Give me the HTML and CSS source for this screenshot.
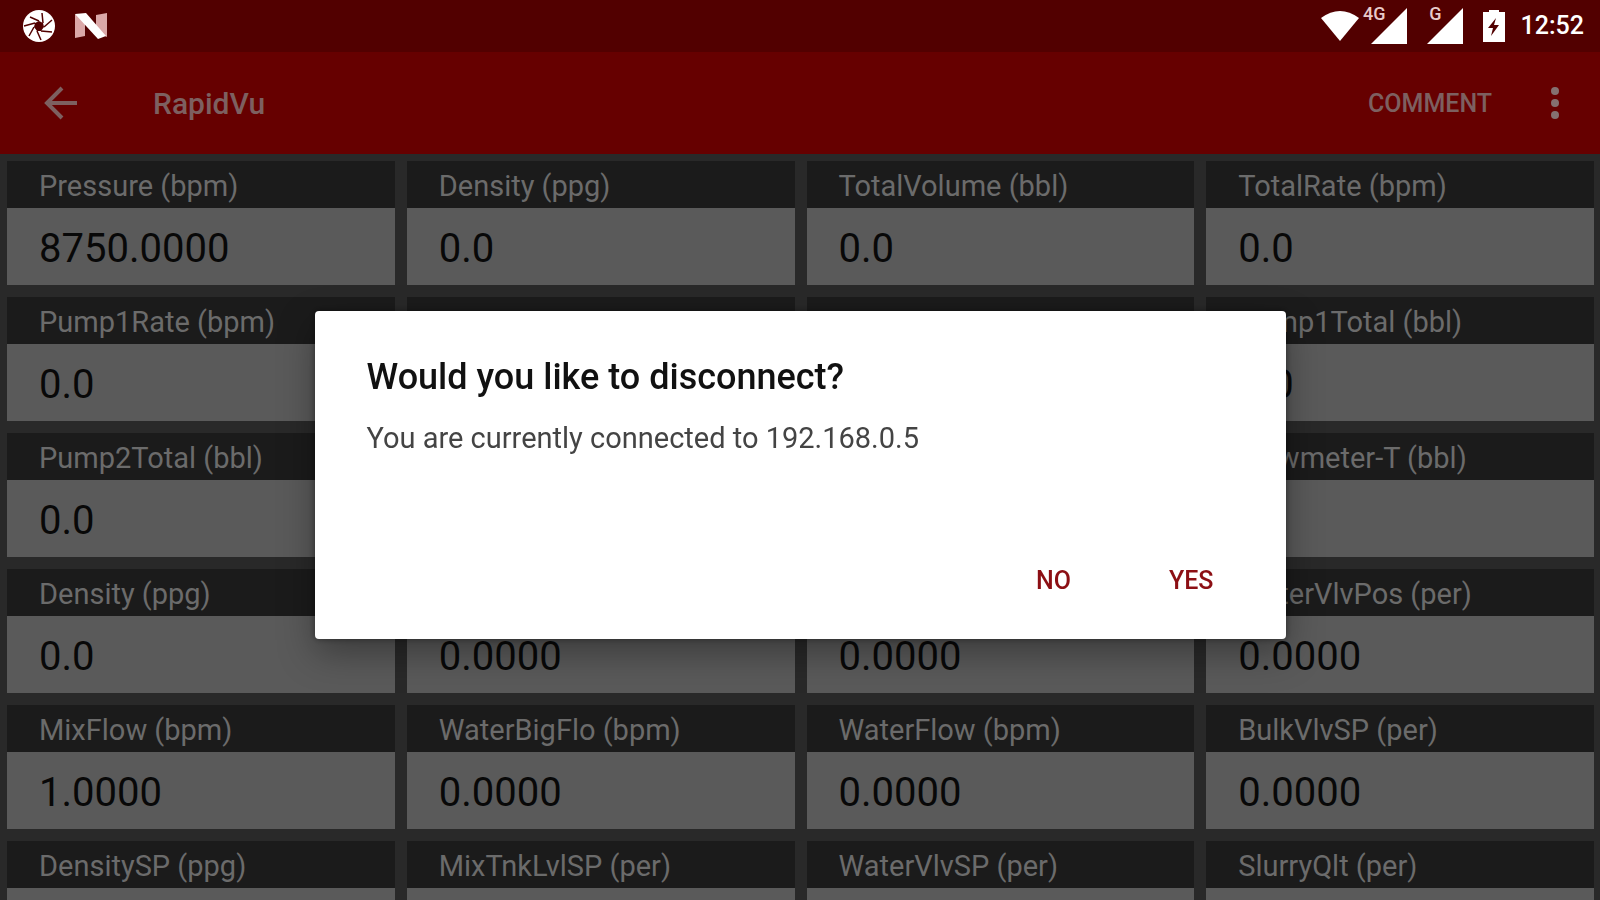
FILE: index.html
```html
<!DOCTYPE html>
<html lang="en">
<head>
    <meta charset="UTF-8">
    <meta name="viewport" content="width=device-width,initial-scale=1">
    <title>RapidVu</title>
    <link rel="stylesheet" href="styles.css">
</head>
<body>

<div class="status">
    <div class="status-left">
        <svg width="34" height="34" viewBox="0 0 34 34">
            <circle cx="17" cy="17" r="16" fill="#fff"/>
            <path d="M17 12l4 2 1 4-3 4-4 0-3-4 1-4z" fill="#520000"/>
            <path d="M17 12L8 8M21 14l-1-10M22 18l8-7M19 22l11 1M15 22l4 9M12 18l-5 9M13 14L2 17" stroke="#520000" stroke-width="1.5" fill="none"/>
        </svg>
        <svg width="34" height="28" viewBox="0 0 34 28">
            <path d="M1 2l10 6v16L1 26zM33 1v24l-11-5V3z" fill="#dba8a8"/>
            <path d="M1 2l11-1 20 23-8 3z" fill="#fff"/>
        </svg>
    </div>
    <div class="status-right">
        <svg width="38" height="32" viewBox="0 0 38 32"><path d="M0 8Q19-6 38 8L19 31z" fill="#fff"/></svg>
        <div class="signal">
            <span class="net">4G</span>
            <svg width="36" height="36" viewBox="0 0 36 36"><path d="M36 0v36H0z" fill="#fff"/></svg>
        </div>
        <div class="signal">
            <span class="net">G</span>
            <svg width="36" height="36" viewBox="0 0 36 36"><path d="M36 0v36H0z" fill="#fff"/></svg>
        </div>
        <svg width="22" height="32" viewBox="0 0 22 32">
            <path d="M6 0h10v2h6v30H0V2h6z" fill="#fff"/>
            <path d="M13 8L5 18h5l-2 8 8-11h-5z" fill="#520000"/>
        </svg>
        <span class="time">12:52</span>
    </div>
</div>

<header class="bar">
    <button class="icon-btn" type="button" aria-label="Back">
        <svg width="34" height="34" viewBox="0 0 34 34" fill="none" stroke="#7d6060" stroke-width="4"><path d="M33 17H4M18 2L3 17l15 15"/></svg>
    </button>
    <h1 class="bar-title">RapidVu</h1>
    <button class="comment" type="button">COMMENT</button>
    <button class="icon-btn" type="button" aria-label="More">
        <svg width="10" height="34" viewBox="0 0 10 34" fill="#857070"><circle cx="5" cy="5" r="4"/><circle cx="5" cy="17" r="4"/><circle cx="5" cy="29" r="4"/></svg>
    </button>
</header>

<main class="grid">
    <dl class="card"><dt>Pressure (bpm)</dt><dd>8750.0000</dd></dl>
    <dl class="card"><dt>Density (ppg)</dt><dd>0.0</dd></dl>
    <dl class="card"><dt>TotalVolume (bbl)</dt><dd>0.0</dd></dl>
    <dl class="card"><dt>TotalRate (bpm)</dt><dd>0.0</dd></dl>

    <dl class="card"><dt>Pump1Rate (bpm)</dt><dd>0.0</dd></dl>
    <dl class="card"><dt></dt><dd></dd></dl>
    <dl class="card"><dt></dt><dd></dd></dl>
    <dl class="card"><dt>Pump1Total (bbl)</dt><dd>0.0</dd></dl>

    <dl class="card"><dt>Pump2Total (bbl)</dt><dd>0.0</dd></dl>
    <dl class="card"><dt></dt><dd></dd></dl>
    <dl class="card"><dt></dt><dd></dd></dl>
    <dl class="card"><dt>Flowmeter-T (bbl)</dt><dd></dd></dl>

    <dl class="card"><dt>Density (ppg)</dt><dd>0.0</dd></dl>
    <dl class="card"><dt></dt><dd>0.0000</dd></dl>
    <dl class="card"><dt></dt><dd>0.0000</dd></dl>
    <dl class="card"><dt>WaterVlvPos (per)</dt><dd>0.0000</dd></dl>

    <dl class="card"><dt>MixFlow (bpm)</dt><dd>1.0000</dd></dl>
    <dl class="card"><dt>WaterBigFlo (bpm)</dt><dd>0.0000</dd></dl>
    <dl class="card"><dt>WaterFlow (bpm)</dt><dd>0.0000</dd></dl>
    <dl class="card"><dt>BulkVlvSP (per)</dt><dd>0.0000</dd></dl>

    <dl class="card"><dt>DensitySP (ppg)</dt><dd></dd></dl>
    <dl class="card"><dt>MixTnkLvlSP (per)</dt><dd></dd></dl>
    <dl class="card"><dt>WaterVlvSP (per)</dt><dd></dd></dl>
    <dl class="card"><dt>SlurryQlt (per)</dt><dd></dd></dl>
</main>

<div class="overlay">
    <section class="dialog" role="dialog" aria-labelledby="dialog-title">
        <h2 id="dialog-title">Would you like to disconnect?</h2>
        <p>You are currently connected to 192.168.0.5</p>
        <div class="actions">
            <button type="button">NO</button>
            <button type="button">YES</button>
        </div>
    </section>
</div>

</body>
</html>
```
FILE: styles.css
```css
*{
    margin:0;
    padding:0;
    box-sizing:border-box;
}

body {
    display:flex;
    flex-direction:column;
    height:100vh;
    background:#292929;
    font-family:Roboto, "Liberation Sans", sans-serif;
}
button {
    border:0;
    background:none;
    font-family:inherit;
    cursor:pointer;
}
svg {
    display:block;
}

/* status bar */
.status {
    display:flex;
    flex:none;
    justify-content:space-between;
    align-items:center;
    height:52px;
    padding:0 16px 0 22px;
    background:#520000;
    color:#fff;
}
.status-left {
    display:flex;
    align-items:center;
    gap:18px;
}
.status-right {
    display:flex;
    align-items:center;
    gap:12px;
}
.signal {
    position:relative;
    margin-right:8px;
}
.net {
    position:absolute;
    top:-4px;
    right:21px;
    font-size:18px;
    font-weight:500;
    line-height:20px;
    color:#e8caca;
}
.time {
    margin-left:4px;
    font-size:25px;
    font-weight:500;
    line-height:36px;
}

/* app bar */
.bar {
    display:flex;
    flex:none;
    align-items:center;
    height:102px;
    padding:0 40px 0 44px;
    background:#600;
    color:#7d6060;
}
.bar-title {
    flex:1;
    margin-left:75px;
    padding-top:2px;
    font-size:30px;
    font-weight:500;
    line-height:36px;
}
.comment {
    margin-right:58px;
    padding-top:2px;
    color:inherit;
    font-size:25px;
    font-weight:500;
    line-height:36px;
}

/* readings */
.grid {
    display:grid;
    flex:1;
    grid-template-columns:repeat(4, 1fr);
    align-content:start;
    gap:12px;
    min-height:0;
    overflow:hidden;
    padding:7px 6px 7px 7px;
}
.card dt {
    height:47px;
    padding:3px 32px 0;
    background:#1b1b1b;
    color:#6b6b6b;
    font-size:29px;
    line-height:44px;
}
.card dd {
    height:77px;
    padding:4px 32px 0;
    background:#5a5a5a;
    color:#080808;
    font-size:40px;
    line-height:73px;
}

/* dialog */
.overlay {
    position:fixed;
    top:50px;
    right:0;
    bottom:0;
    left:0;
    display:flex;
    align-items:center;
    justify-content:center;
}
.dialog {
    width:90%;
    max-width:971px;
    padding:44px 48px 32px 52px;
    border-radius:4px;
    background:#fff;
    box-shadow:0 14px 36px rgba(0,0,0,.35), 0 0 6px rgba(0,0,0,.4);
}
.dialog h2 {
    color:#111;
    font-size:36px;
    font-weight:500;
    line-height:44px;
}
.dialog p {
    margin-top:21px;
    color:#444;
    font-size:29px;
    line-height:36px;
}
.actions {
    display:flex;
    justify-content:flex-end;
    gap:50px;
    margin-top:99px;
}
.actions button {
    padding:0 24px;
    color:#8c0f14;
    font-size:25px;
    font-weight:500;
    line-height:52px;
}
```
